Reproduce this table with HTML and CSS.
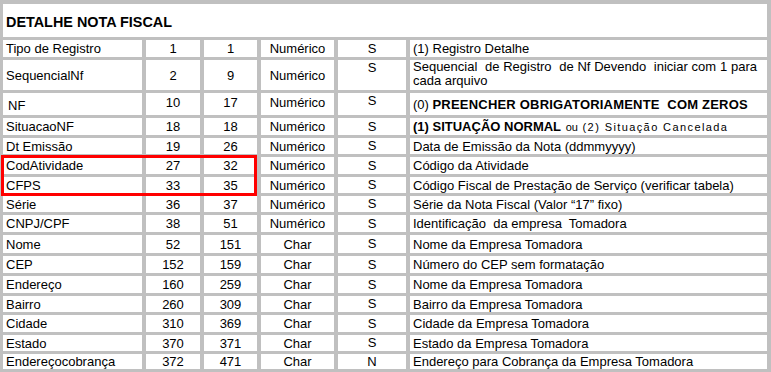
FILE: index.html
```html
<!DOCTYPE html>
<html lang="pt-BR">
<head>
<meta charset="utf-8">
<title>Detalhe Nota Fiscal</title>
<link rel="stylesheet" href="styles.css">
</head>
<body>
<div class="sheet">
  <div class="grid">
    <div class="cell title">DETALHE NOTA FISCAL</div>

    <div class="cell">Tipo de Registro</div><div class="cell c">1</div><div class="cell c">1</div><div class="cell c">Numérico</div><div class="cell c s">S</div><div class="cell">(1) Registro Detalhe</div>

    <div class="cell">SequencialNf</div><div class="cell c">2</div><div class="cell c">9</div><div class="cell c">Numérico</div><div class="cell c s top">S</div><div class="cell desc2"><span class="just">Sequencial&nbsp; de Registro&nbsp; de Nf Devendo&nbsp; iniciar com 1 para</span><span>cada arquivo</span></div>

    <div class="cell nf">NF</div><div class="cell c up">10</div><div class="cell c up">17</div><div class="cell c up">Numérico</div><div class="cell c s up2">S</div><div class="cell"><span>(0) <b class="wideb">PREENCHER OBRIGATORIAMENTE&nbsp; COM ZEROS</b></span></div>

    <div class="cell">SituacaoNF</div><div class="cell c">18</div><div class="cell c">18</div><div class="cell c">Numérico</div><div class="cell c s">S</div><div class="cell"><span><b>(1) SITUAÇÃO NORMAL</b> <span class="small">ou</span> <span class="small wide">(2) Situação Cancelada</span></span></div>

    <div class="cell">Dt Emissão</div><div class="cell c">19</div><div class="cell c">26</div><div class="cell c">Numérico</div><div class="cell c s">S</div><div class="cell">Data de Emissão da Nota (ddmmyyyy)</div>

    <div class="cell">CodAtividade</div><div class="cell c">27</div><div class="cell c">32</div><div class="cell c">Numérico</div><div class="cell c s">S</div><div class="cell">Código da Atividade</div>

    <div class="cell">CFPS</div><div class="cell c">33</div><div class="cell c">35</div><div class="cell c">Numérico</div><div class="cell c s">S</div><div class="cell">Código Fiscal de Prestação de Serviço (verificar tabela)</div>

    <div class="cell">Série</div><div class="cell c">36</div><div class="cell c">37</div><div class="cell c">Numérico</div><div class="cell c s">S</div><div class="cell">Série da Nota Fiscal (Valor “17” fixo)</div>

    <div class="cell">CNPJ/CPF</div><div class="cell c">38</div><div class="cell c">51</div><div class="cell c">Numérico</div><div class="cell c s">S</div><div class="cell">Identificação&nbsp; da empresa&nbsp; Tomadora</div>

    <div class="cell">Nome</div><div class="cell c">52</div><div class="cell c">151</div><div class="cell c">Char</div><div class="cell c s">S</div><div class="cell">Nome da Empresa Tomadora</div>

    <div class="cell">CEP</div><div class="cell c">152</div><div class="cell c">159</div><div class="cell c">Char</div><div class="cell c s">S</div><div class="cell">Número do CEP sem formatação</div>

    <div class="cell">Endereço</div><div class="cell c">160</div><div class="cell c">259</div><div class="cell c">Char</div><div class="cell c s">S</div><div class="cell">Nome da Empresa Tomadora</div>

    <div class="cell">Bairro</div><div class="cell c">260</div><div class="cell c">309</div><div class="cell c">Char</div><div class="cell c s">S</div><div class="cell">Bairro da Empresa Tomadora</div>

    <div class="cell">Cidade</div><div class="cell c">310</div><div class="cell c">369</div><div class="cell c">Char</div><div class="cell c s">S</div><div class="cell">Cidade da Empresa Tomadora</div>

    <div class="cell">Estado</div><div class="cell c">370</div><div class="cell c">371</div><div class="cell c">Char</div><div class="cell c s">S</div><div class="cell">Estado da Empresa Tomadora</div>

    <div class="cell">Endereçocobrança</div><div class="cell c">372</div><div class="cell c">471</div><div class="cell c">Char</div><div class="cell c s">N</div><div class="cell">Endereço para Cobrança da Empresa Tomadora</div>
  </div>
  <div class="highlight"></div>
</div>
</body>
</html>
```

FILE: styles.css
```css
html, body {
  margin: 0;
  padding: 0;
  background: #ffffff;
}

.sheet {
  position: relative;
  width: 771px;
  height: 372px;
  overflow: hidden;
}

.grid {
  box-sizing: border-box;
  width: 771px;
  height: 372px;
  display: grid;
  grid-template-columns: 139px 54px 53px 73px 68px 357px;
  grid-template-rows: 33px 17px 30px 22px 17px 16px 17px 16px 16px 17px 18px 17px 17px 16px 17px 16px 15px;
  gap: 3px 4px;
  padding: 4px 4px 3px 3px;
  background: #c0c0c0;
  font-family: "Liberation Sans", Arial, sans-serif;
  font-size: 13px;
  line-height: 15px;
  color: #000;
}

.cell {
  background: #ffffff;
  padding: 0 3px;
  display: flex;
  align-items: center;
  white-space: nowrap;
  overflow: hidden;
}

.c {
  justify-content: center;
}

.s {
  padding-bottom: 1px;
}

.top {
  align-items: flex-start;
  padding-top: 0;
}

.up {
  padding-bottom: 4px;
}

.up2 {
  padding-bottom: 8px;
}

.title {
  grid-column: 1 / -1;
  align-items: flex-start;
  padding-top: 10px;
  font-size: 14.4px;
  font-weight: bold;
  line-height: 16px;
}

.nf {
  padding-left: 5px;
  padding-top: 3px;
}

.desc2 {
  flex-direction: column;
  align-items: stretch;
  justify-content: flex-start;
  line-height: 14px;
  padding: 0 10px 0 3px;
}

.just {
  display: block;
  text-align: justify;
  text-align-last: justify;
}

.small {
  font-size: 11px;
  margin-left: 1px;
}

.wide {
  letter-spacing: 1.4px;
}

.wideb {
  letter-spacing: 0.2px;
}

b {
  font-weight: bold;
}

.highlight {
  position: absolute;
  left: 1px;
  top: 155px;
  width: 250px;
  height: 35px;
  border: 3px solid #ff0000;
}
```
